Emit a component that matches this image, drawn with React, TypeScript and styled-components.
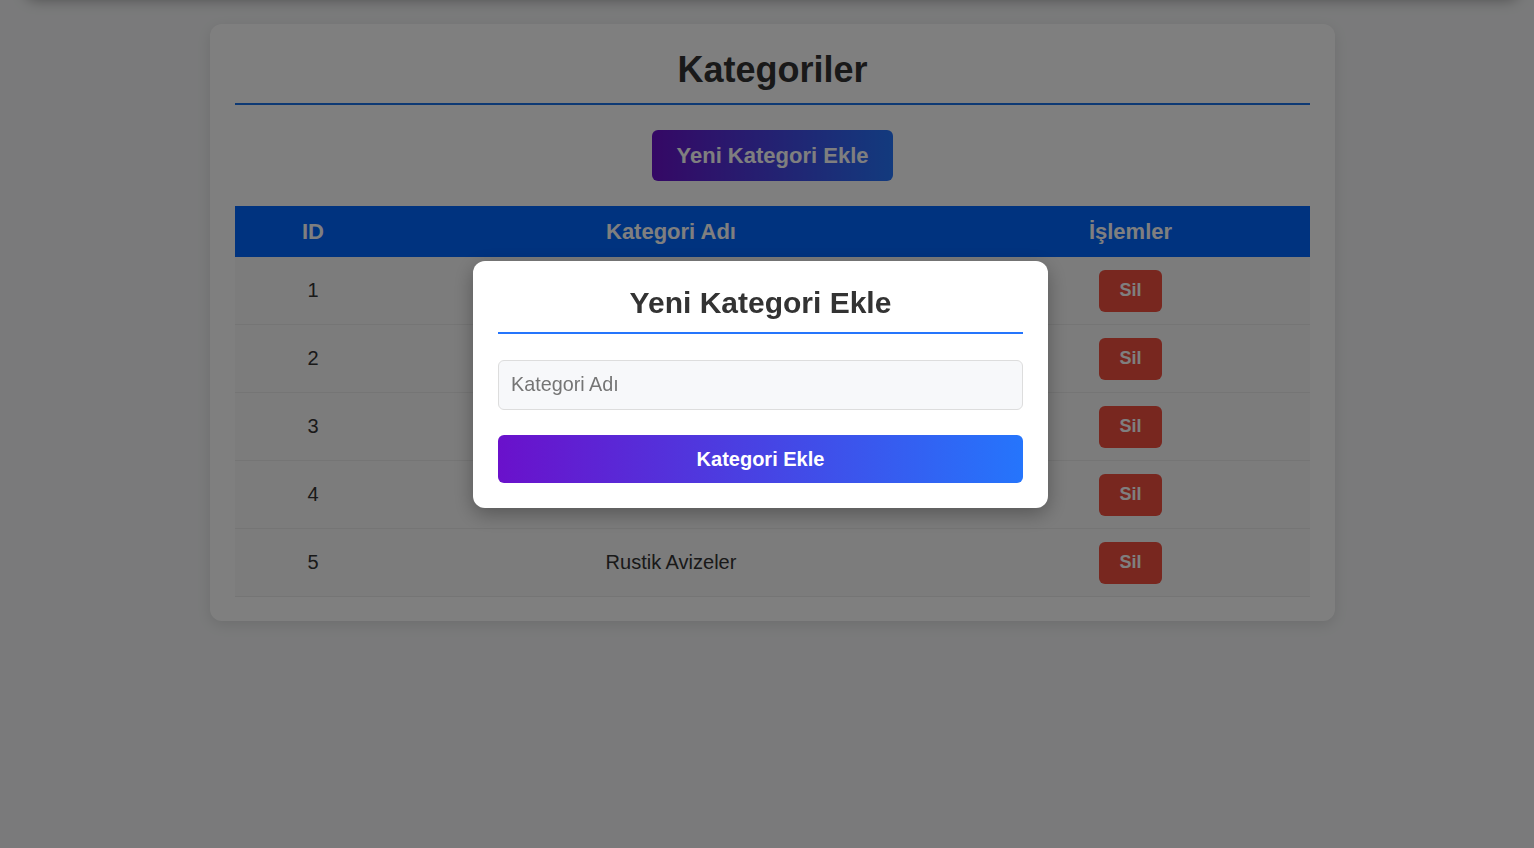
import React from "react";
import styled, { createGlobalStyle } from "styled-components";

const Global = createGlobalStyle`
  html, body { margin: 0; padding: 0; }
  body {
    background: #f4f5f6;
    font-family: "Liberation Sans", Arial, sans-serif;
    color: #333;
    height: 848px;
    overflow: hidden;
  }
`;

const Page = styled.div`
  position: relative;
  min-height: 848px;
  padding: 24px 199px 0 210px;
  box-sizing: border-box;
`;

const TopShadow = styled.div`
  position: absolute;
  left: 25px;
  right: 15px;
  top: -20px;
  height: 20px;
  border-radius: 0 0 12px 12px;
  box-shadow: 0 0 14px rgba(0, 0, 0, 0.35);
`;

const Card = styled.div`
  background: #fff;
  border-radius: 12px;
  padding: 25px 25px 24px;
  box-shadow: 0 4px 14px rgba(0, 0, 0, 0.1);
  display: flex;
  flex-direction: column;
  align-items: center;
`;

const Title = styled.h1`
  margin: 0;
  width: 100%;
  text-align: center;
  font-size: 36px;
  line-height: 41px;
  font-weight: 700;
  color: #333;
  padding-bottom: 13px;
  border-bottom: 2px solid #1a73e8;
`;

const AddButton = styled.button`
  margin: 25px 0 25px;
  height: 51px;
  padding: 0 25px;
  border: none;
  border-radius: 6px;
  background: linear-gradient(90deg, #6a11cb, #2575fc);
  color: #fff;
  font-family: "Liberation Sans", Arial, sans-serif;
  font-size: 22px;
  font-weight: 700;
`;

const Table = styled.table`
  width: 100%;
  border-collapse: collapse;
`;

const Th = styled.th<{ $w: number }>`
  width: ${(p) => p.$w}px;
  height: 51px;
  padding: 0;
  background: #0066ff;
  color: #fff;
  font-size: 22px;
  font-weight: 700;
  text-align: center;
`;

const Tr = styled.tr`
  background: #f8f8f8;
  border-bottom: 1px solid #eaeaea;
`;

const Td = styled.td`
  height: 67px;
  padding: 0;
  text-align: center;
  font-size: 20px;
  color: #333;
`;

const DeleteButton = styled.button`
  width: 63px;
  height: 42px;
  border: none;
  border-radius: 6px;
  background: #f04e3e;
  color: #fff;
  font-family: "Liberation Sans", Arial, sans-serif;
  font-size: 18px;
  font-weight: 700;
`;

const Overlay = styled.div`
  position: fixed;
  inset: 0;
  background: rgba(0, 0, 0, 0.5);
`;

const Modal = styled.div`
  position: absolute;
  left: 473px;
  top: 261px;
  width: 575px;
  box-sizing: border-box;
  padding: 25px;
  background: #fff;
  border-radius: 12px;
  box-shadow: 0 6px 20px rgba(0, 0, 0, 0.3);
  display: flex;
  flex-direction: column;
`;

const ModalTitle = styled.h2`
  margin: 0;
  text-align: center;
  font-size: 30px;
  line-height: 33px;
  font-weight: 700;
  color: #333;
  padding-bottom: 13px;
  border-bottom: 2px solid #2575fc;
`;

const Input = styled.input`
  margin-top: 26px;
  height: 50px;
  box-sizing: border-box;
  padding: 0 12px 2px;
  border: 1px solid #ddd;
  border-radius: 6px;
  background: #f7f8fa;
  font-family: "Liberation Sans", Arial, sans-serif;
  font-size: 19.8px;
  color: #333;
  outline: none;
  &::placeholder { color: #757575; }
`;

const SubmitButton = styled.button`
  margin-top: 25px;
  height: 48px;
  border: none;
  border-radius: 6px;
  background: linear-gradient(90deg, #6a11cb, #2575fc);
  color: #fff;
  font-family: "Liberation Sans", Arial, sans-serif;
  font-size: 20px;
  font-weight: 700;
`;

const rows = [
  { id: 1, name: "" },
  { id: 2, name: "" },
  { id: 3, name: "" },
  { id: 4, name: "" },
  { id: 5, name: "Rustik Avizeler" },
];

export default function App() {
  return (
    <>
      <Global />
      <Page>
        <TopShadow />
        <Card>
          <Title>Kategoriler</Title>
          <AddButton>Yeni Kategori Ekle</AddButton>
          <Table>
            <thead>
              <tr>
                <Th $w={156}>ID</Th>
                <Th $w={560}>Kategori Adı</Th>
                <Th $w={359}>İşlemler</Th>
              </tr>
            </thead>
            <tbody>
              {rows.map((r) => (
                <Tr key={r.id}>
                  <Td>{r.id}</Td>
                  <Td>{r.name}</Td>
                  <Td>
                    <DeleteButton>Sil</DeleteButton>
                  </Td>
                </Tr>
              ))}
            </tbody>
          </Table>
        </Card>
        <Overlay>
          <Modal>
            <ModalTitle>Yeni Kategori Ekle</ModalTitle>
            <Input placeholder="Kategori Adı" />
            <SubmitButton>Kategori Ekle</SubmitButton>
          </Modal>
        </Overlay>
      </Page>
    </>
  );
}
